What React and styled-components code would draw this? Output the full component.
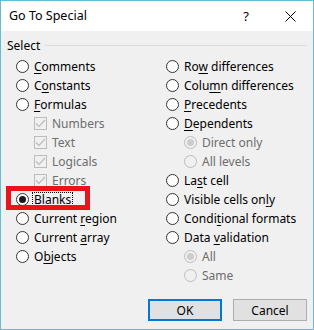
import React from "react";
import styled, { createGlobalStyle, css } from "styled-components";

const Global = createGlobalStyle`
  html, body { margin: 0; padding: 0; background: #ffffff; }
  body { font-family: "Noto Sans", "Open Sans", sans-serif; font-size: 12px; color: #000; }
  * { box-sizing: border-box; }
`;

const Window = styled.div`
  width: 314px;
  height: 330px;
  border: 1px solid #62bfd3;
  display: flex;
  flex-direction: column;
  background: #f0f0f0;
`;

const TitleBar = styled.div`
  height: 30px;
  background: #ffffff;
  display: flex;
  align-items: center;
  padding-left: 8px;
`;

const Title = styled.div`
  flex: 1;
  font-size: 12.5px;
  color: #000;
  margin-top: -1px;
`;

const TitleButton = styled.div`
  width: ${(p) => p.$w}px;
  margin-right: ${(p) => p.$mr || 0}px;
  height: 30px;
  display: flex;
  align-items: center;
  justify-content: center;
  font-size: 13px;
  color: #000;
`;

const Body = styled.div`
  flex: 1;
  padding: 7px 6px 0 6px;
  display: flex;
  flex-direction: column;
`;

const GroupHeader = styled.div`
  display: flex;
  align-items: center;
  gap: 5px;
  height: 14px;
  margin-bottom: 5px;
`;

const GroupLine = styled.div`
  flex: 1;
  height: 1px;
  background: #dcdcdc;
`;

const Columns = styled.div`
  display: grid;
  grid-template-columns: 150px 150px;
  margin-left: 9px;
`;

const Column = styled.div`
  display: flex;
  flex-direction: column;
`;

const Row = styled.div`
  height: 19px;
  display: flex;
  align-items: center;
  gap: 4px;
  padding-left: ${(p) => (p.$indent ? 18 : 0)}px;
  color: ${(p) => (p.$disabled ? "#6d6d6d" : "#000")};
  position: relative;
  white-space: nowrap;
`;

const RadioCircle = styled.span`
  width: 13px;
  height: 13px;
  border-radius: 50%;
  border: 1px solid ${(p) => (p.$disabled ? "#bcbcbc" : "#333333")};
  background: ${(p) => (p.$disabled ? "#f0f0f0" : "#ffffff")};
  display: flex;
  align-items: center;
  justify-content: center;
  flex: none;
  &::after {
    content: "";
    display: ${(p) => (p.$checked ? "block" : "none")};
    width: 7px;
    height: 7px;
    border-radius: 50%;
    background: ${(p) => (p.$disabled ? "#cccccc" : "#1a1a1a")};
  }
`;

const CheckBox = styled.span`
  width: 13px;
  height: 13px;
  border: 1px solid #bcbcbc;
  background: #f0f0f0;
  flex: none;
  display: flex;
  align-items: center;
  justify-content: center;
`;

const Label = styled.span`
  padding: 0 1px;
  line-height: 14px;
  border: 1px dotted ${(p) => (p.$focus ? "#000" : "transparent")};
  margin-left: -1px;
`;

const Key = styled.span`
  text-decoration: underline;
  text-underline-offset: 2px;
`;

const Highlight = styled.div`
  position: absolute;
  left: -10px;
  top: -4px;
  width: 84px;
  height: 24px;
  border: 5px solid #e8141d;
  pointer-events: none;
`;

const Footer = styled.div`
  margin-top: auto;
  display: flex;
  justify-content: flex-end;
  gap: 11px;
  padding: 0 0 8px 0;
`;

const Button = styled.button`
  width: 74px;
  height: 22px;
  font-family: inherit;
  font-size: 12px;
  color: #000;
  background: #e1e1e1;
  padding: 0;
  ${(p) =>
    p.$default
      ? css`border: 2px solid #0078d7;`
      : css`border: 1px solid #adadad;`}
`;

function Text({ label, k, focus }) {
  if (k == null) return <Label $focus={focus}>{label}</Label>;
  return (
    <Label $focus={focus}>
      {label.slice(0, k)}
      <Key>{label[k]}</Key>
      {label.slice(k + 1)}
    </Label>
  );
}

const Check = () => (
  <CheckBox>
    <svg width="11" height="11" viewBox="0 0 11 11">
      <path d="M1 5.5 L4 8.5 L10 2" fill="none" stroke="#bcbcbc" strokeWidth="1.2" />
    </svg>
  </CheckBox>
);

const left = [
  { t: "radio", label: "Comments", k: 0 },
  { t: "radio", label: "Constants", k: 1 },
  { t: "radio", label: "Formulas", k: 0 },
  { t: "check", label: "Numbers" },
  { t: "check", label: "Text" },
  { t: "check", label: "Logicals" },
  { t: "check", label: "Errors" },
  { t: "radio", label: "Blanks", k: 4, checked: true, focus: true, highlight: true },
  { t: "radio", label: "Current region", k: 8 },
  { t: "radio", label: "Current array", k: 8 },
  { t: "radio", label: "Objects", k: 1 },
];

const right = [
  { t: "radio", label: "Row differences", k: 2 },
  { t: "radio", label: "Column differences", k: 4 },
  { t: "radio", label: "Precedents", k: 0 },
  { t: "radio", label: "Dependents", k: 0 },
  { t: "sub", label: "Direct only", checked: true },
  { t: "sub", label: "All levels" },
  { t: "radio", label: "Last cell", k: 2 },
  { t: "radio", label: "Visible cells only", k: 16 },
  { t: "radio", label: "Conditional formats", k: 5 },
  { t: "radio", label: "Data validation", k: 5 },
  { t: "sub", label: "All", checked: true },
  { t: "sub", label: "Same" },
];

function Item({ it }) {
  if (it.t === "check")
    return (
      <Row $indent $disabled>
        <Check />
        <Text label={it.label} />
      </Row>
    );
  if (it.t === "sub")
    return (
      <Row $indent $disabled>
        <RadioCircle $disabled $checked={it.checked} />
        <Text label={it.label} />
      </Row>
    );
  return (
    <Row>
      <RadioCircle $checked={it.checked} />
      <Text label={it.label} k={it.k} focus={it.focus} />
      {it.highlight && <Highlight />}
    </Row>
  );
}

export default function App() {
  return (
    <>
      <Global />
      <Window>
        <TitleBar>
          <Title>Go To Special</Title>
          <TitleButton $w={14} $mr={14}>?</TitleButton>
          <TitleButton $w={46}>
            <svg width="11" height="11" viewBox="0 0 11 11">
              <path d="M0.5 0.5 L10.5 10.5 M10.5 0.5 L0.5 10.5" stroke="#000" strokeWidth="1" />
            </svg>
          </TitleButton>
        </TitleBar>
        <Body>
          <GroupHeader>
            <span>Select</span>
            <GroupLine />
          </GroupHeader>
          <Columns>
            <Column>
              {left.map((it) => (
                <Item key={it.label} it={it} />
              ))}
            </Column>
            <Column>
              {right.map((it) => (
                <Item key={it.label} it={it} />
              ))}
            </Column>
          </Columns>
          <Footer>
            <Button $default>OK</Button>
            <Button>Cancel</Button>
          </Footer>
        </Body>
      </Window>
    </>
  );
}
